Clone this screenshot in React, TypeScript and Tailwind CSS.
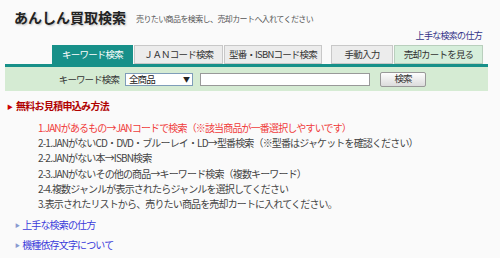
import React from 'react';

const steps = [
  { text: '1.JANがあるもの→JANコードで検索（※該当商品が一番選択しやすいです）', red: true },
  { text: '2-1.JANがないCD・DVD・ブルーレイ・LD→型番検索（※型番はジャケットを確認ください）' },
  { text: '2-2.JANがない本→ISBN検索' },
  { text: '2-3.JANがないその他の商品→キーワード検索（複数キーワード）' },
  { text: '2-4.複数ジャンルが表示されたらジャンルを選択してください' },
  { text: '3.表示されたリストから、売りたい商品を売却カートに入れてください。' },
];

const tabs = [
  { label: 'キーワード検索', w: 'w-[81px]', active: true },
  { label: 'ＪＡＮコード検索', w: 'w-[89px]' },
  { label: '型番・ISBNコード検索', w: 'w-[98px]' },
  { label: '手動入力', w: 'w-[62px]', gap: true },
  { label: '売却カートを見る', w: 'w-[89px]', cart: true },
];

const App = () => {
  return (
    <div className="w-[500px] h-[258px] overflow-hidden bg-[#fafafa] text-[#333] font-['Noto_Sans_CJK_JP','Noto_Sans',sans-serif]">
      {/* header */}
      <div className="flex items-end pl-[14px] pt-[4px] h-[24px]">
        <h1 className="text-[14px] font-bold leading-none text-[#222] [text-shadow:1px_1px_2px_rgba(0,0,0,0.25)]">
          あんしん買取検索
        </h1>
        <span className="ml-[10px] text-[8px] leading-none tracking-[-0.6px] text-[#555] mb-[1px]">
          売りたい商品を検索し、売却カートへ入れてください
        </span>
      </div>
      <div className="flex justify-end pr-[18px] mt-[7px] h-[12px]">
        <a className="text-[9px] leading-none tracking-[-0.7px] text-[#333388]">上手な検索の仕方</a>
      </div>

      {/* tabs */}
      <div className="flex items-end pl-[52px] mt-[1px] h-[20px] gap-[1px]">
        {tabs.map((t) => (
          <div
            key={t.label}
            className={
              `${t.w} h-[19px] flex items-center justify-center text-[9.5px] tracking-[-0.8px] leading-none border ` +
              (t.active
                ? 'bg-[#179089] border-[#179089] text-white'
                : t.cart
                ? 'bg-[#d6eedb] border-[#b9cfbd] text-[#333]'
                : 'bg-[#ececec] border-[#c8c8c8] text-[#333]') +
              (t.gap ? ' ml-[8px]' : '')
            }
          >
            {t.label}
          </div>
        ))}
      </div>
      <div className="mx-[5px] w-[483px] h-[3px] bg-[#179089]" />

      {/* search panel */}
      <div className="mx-[5px] w-[483px] h-[24px] bg-[#d5ebd3] flex items-center text-[9.5px] tracking-[-0.9px]">
        <span className="w-[114px] text-right text-[#333]">キーワード検索</span>
        <div className="ml-[6px] w-[68px] h-[13px] bg-white border border-[#7f9db9] flex items-center justify-between px-[3px] text-[#222]">
          <span>全商品</span>
          <span className="text-[7px]">▼</span>
        </div>
        <div className="ml-[7px] w-[170px] h-[13px] bg-white border border-[#999]" />
        <button className="ml-[10px] w-[46px] h-[15px] border border-[#999] rounded-[2px] bg-gradient-to-b from-[#fdfdfd] to-[#dcdcdc] text-[9.5px] text-[#333] leading-none">
          検索
        </button>
      </div>

      {/* how to */}
      <div className="flex items-center pl-[7px] mt-[9px] h-[12px]">
        <span className="text-[6px] text-[#c00] mr-[3px]">▶</span>
        <span className="text-[10px] font-bold tracking-[-0.7px] text-[#b00000] leading-none">無料お見積申込み方法</span>
      </div>
      <ul className="pl-[38px] mt-[8px] text-[10px] tracking-[-0.85px] leading-[15.2px]">
        {steps.map((s) => (
          <li key={s.text} className={s.red ? 'text-[#f03c3c]' : 'text-[#444]'}>
            {s.text}
          </li>
        ))}
      </ul>

      <div className="pl-[15px] mt-[8px] flex flex-col gap-[8px] text-[10px] tracking-[-0.85px] leading-[12px]">
        {['上手な検索の仕方', '機種依存文字について'].map((l) => (
          <div key={l} className="flex items-center">
            <span className="text-[5px] text-[#8a9ad0] mr-[3px]">▶</span>
            <a className="text-[#3a3adb]">{l}</a>
          </div>
        ))}
      </div>
    </div>
  );
};

export default App;
